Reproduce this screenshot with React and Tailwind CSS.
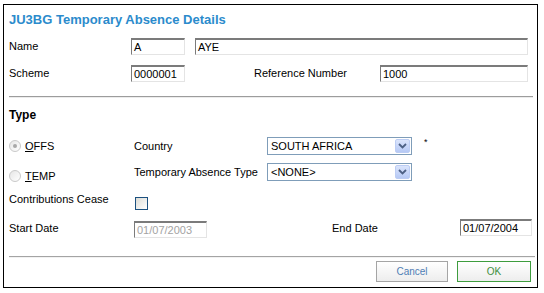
import React from 'react';

const font = { fontFamily: '"Liberation Sans", Arial, sans-serif' };

const TextBox = ({ value, className = '', disabled = false }) => (
  <div
    className={`h-[17px] flex items-center pl-[2px] border-t-2 border-l border-r border-b border-t-[#7b7b7b] border-l-[#7b7b7b] border-r-[#e4e4e4] border-b-[#e4e4e4] bg-white text-[11px] leading-none ${
      disabled ? 'text-[#a3a3a3]' : 'text-black'
    } ${className}`}
  >
    {value}
  </div>
);

const Chevron = () => (
  <svg width="9" height="6" viewBox="0 0 9 6">
    <path d="M1 1 L4.5 4.5 L8 1" fill="none" stroke="#4d6185" strokeWidth="1.8" />
  </svg>
);

const Select = ({ value }) => (
  <div className="w-[145px] h-[18px] flex items-center border border-[#7f9db9] bg-white pl-[3px] pr-[1px]">
    <span className="flex-1 text-[11px] leading-none text-black">{value}</span>
    <div className="w-[15px] h-[14px] flex items-center justify-center rounded-[2px] border border-[#bccdf4] bg-gradient-to-b from-[#dbe5fc] to-[#b6c9f5]">
      <Chevron />
    </div>
  </div>
);

const Radio = ({ checked, label, under, rest }) => (
  <div className="h-[18px] flex items-center">
    <div className="w-[12px] h-[12px] rounded-full border border-[#c9c9c9] bg-gradient-to-br from-[#e6e6e6] to-[#ffffff] flex items-center justify-center">
      {checked && <div className="w-[4px] h-[4px] rounded-full bg-[#a8a8a8]" />}
    </div>
    <span className="ml-[4px] text-[11px] leading-none text-black">
      <span className="underline">{under}</span>
      {rest}
    </span>
  </div>
);

const App = () => {
  return (
    <div className="w-[544px] h-[293px] bg-white pt-[4px] pl-[3px]" style={font}>
      <div className="w-[535px] h-[284px] border border-black pl-[5px]">
        {/* Title */}
        <div className="h-[33px] pt-[7px]">
          <h1 className="text-[13px] leading-[16px] font-bold text-[#2b8bcc]">
            JU3BG Temporary Absence Details
          </h1>
        </div>

        {/* Name */}
        <div className="h-[17px] flex items-center text-[11px] text-black">
          <span className="w-[122px]">Name</span>
          <TextBox value="A" className="w-[54px]" />
          <TextBox value="AYE" className="w-[333px] ml-[10px]" />
        </div>

        {/* Scheme */}
        <div className="h-[17px] mt-[10px] flex items-center text-[11px] text-black">
          <span className="w-[122px]">Scheme</span>
          <TextBox value="0000001" className="w-[54px]" />
          <span className="w-[126px] ml-[69px]">Reference Number</span>
          <TextBox value="1000" className="w-[148px]" />
        </div>

        <div className="w-[524px] mt-[14px] border-t border-t-[#9c9c9c] border-b border-b-[#ececec]" />

        {/* Type */}
        <div className="mt-[10px] text-[12px] leading-[14px] font-bold text-black">Type</div>

        <div className="mt-[15px] flex text-[11px] text-black">
          <div className="w-[125px] flex flex-col">
            <Radio checked under="O" rest="FFS" />
            <div className="mt-[12px]">
              <Radio under="T" rest="EMP" />
            </div>
          </div>
          <div className="flex flex-col">
            <div className="h-[18px] flex items-center">
              <span className="w-[133px] leading-none">Country</span>
              <Select value="SOUTH AFRICA" />
              <span className="ml-[12px] self-start text-[9px] leading-[10px]">*</span>
            </div>
            <div className="h-[18px] mt-[8px] flex items-center">
              <span className="w-[133px] leading-none">Temporary Absence Type</span>
              <Select value="<NONE>" />
            </div>
          </div>
        </div>

        {/* Contributions */}
        <div className="mt-[12px] h-[13px] flex items-center text-[11px] text-black">
          <span className="w-[126px] leading-[13px] mb-[8px]">Contributions Cease</span>
          <div className="w-[13px] h-[13px] border border-[#1c5180] bg-gradient-to-br from-[#dcdcd6] to-[#ffffff]" />
        </div>

        {/* Dates */}
        <div className="mt-[9px] h-[19px] flex items-start text-[11px] text-black">
          <span className="w-[125px] mt-[2px] leading-[14px]">Start Date</span>
          <TextBox value="01/07/2003" disabled className="w-[73px] mt-[2px]" />
          <span className="w-[128px] ml-[125px] mt-[2px] leading-[14px]">End Date</span>
          <TextBox value="01/07/2004" className="w-[72px]" />
        </div>

        <div className="w-[526px] mt-[18px] border-t border-t-[#a4a4a4] border-b border-b-[#f2f2f2]" />

        {/* Buttons */}
        <div className="mt-[3px] flex ml-[367px]">
          <button className="w-[72px] h-[21px] border border-[#a5a5a5] bg-gradient-to-b from-[#ffffff] to-[#ededed] text-[10px] text-[#4f7db5]">
            Cancel
          </button>
          <button className="w-[74px] h-[21px] ml-[9px] border border-[#3e9c3e] bg-gradient-to-b from-[#ffffff] to-[#ededed] text-[10px] text-[#3e8f3e]">
            OK
          </button>
        </div>
      </div>
    </div>
  );
};

export default App;
